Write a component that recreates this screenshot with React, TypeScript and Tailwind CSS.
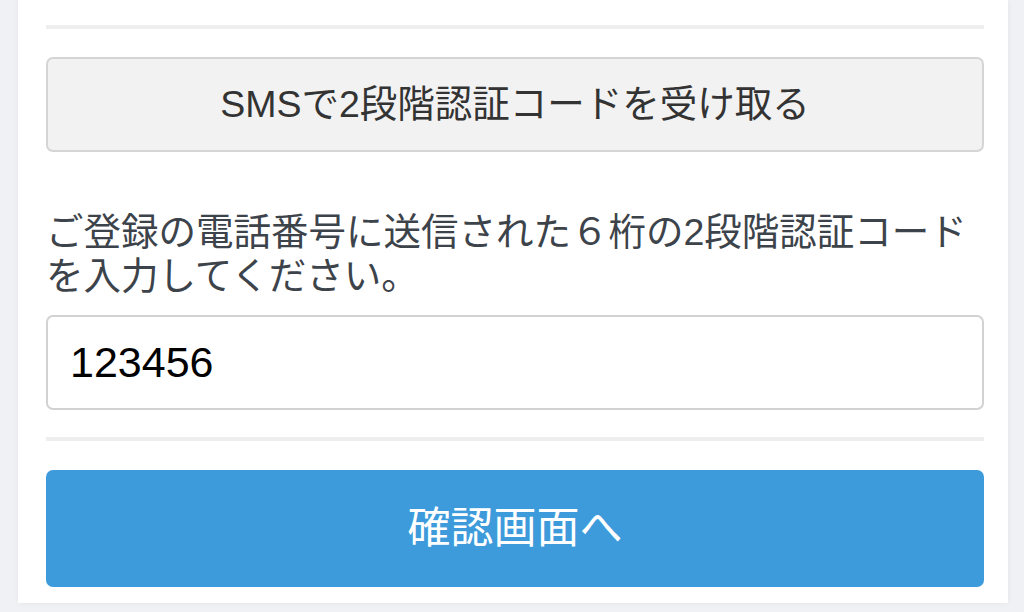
export default function App() {
  return (
    <div
      className="h-[612px] w-[1024px] overflow-hidden bg-[#eff1f4] flex"
      style={{ fontFamily: '"Liberation Sans", "Noto Sans CJK JP", sans-serif' }}
    >
      <div className="ml-[18px] w-[990px] h-[603px] bg-white shadow-[0_0_6px_rgba(0,0,0,0.06)] flex flex-col pl-[28px] pr-[24px] pt-[25px]">
        <div className="h-[4px] bg-[#eeeeee]" />

        <button className="mt-[28px] h-[95px] rounded-[7px] border-2 border-[#d5d5d5] bg-[#f2f2f2] text-[37.5px] text-[#333333] flex items-center justify-center">
          SMSで2段階認証コードを受け取る
        </button>

        <p className="mt-[58px] text-[37.5px] leading-[44px] text-[#3d434a]">
          ご登録の電話番号に送信された６桁の2段階認証コードを入力してください。
        </p>

        <div className="mt-[17px] h-[95px] rounded-[7px] border-2 border-[#d2d2d2] bg-white flex items-center pl-[22px]">
          <span className="text-[43px] text-black">123456</span>
        </div>

        <div className="mt-[27px] h-[4px] bg-[#eeeeee]" />

        <button className="mt-[29px] h-[117px] rounded-[7px] bg-[#3d9bdb] text-[43px] text-white flex items-center justify-center">
          確認画面へ
        </button>
      </div>
    </div>
  );
}
